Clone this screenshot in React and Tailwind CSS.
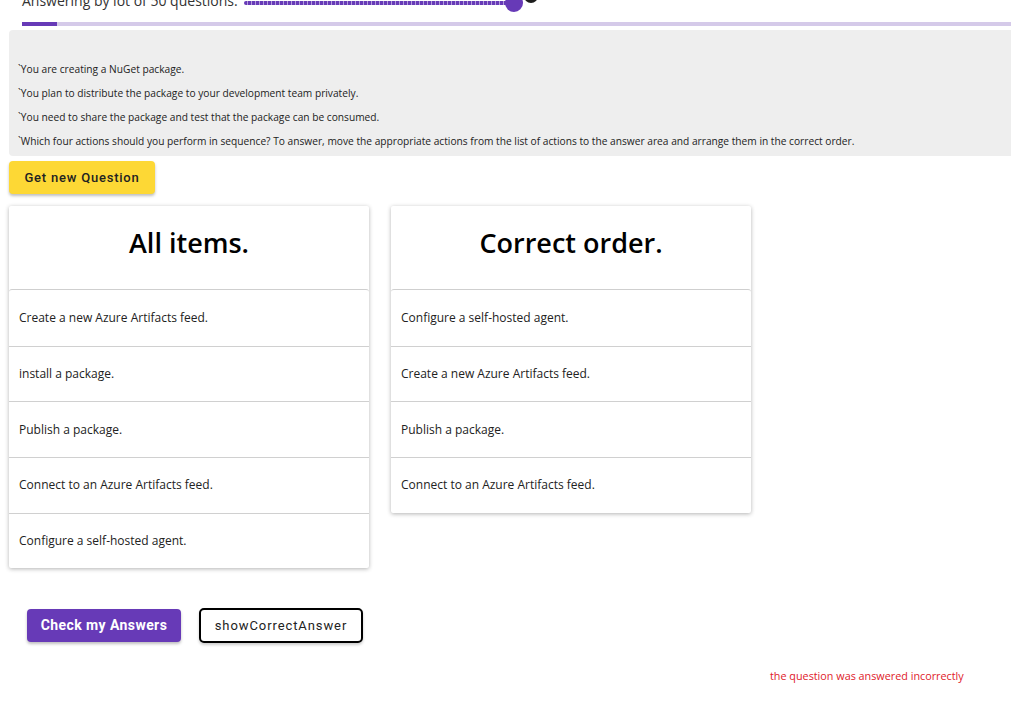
import React from "react";

const allItems = [
  "Create a new Azure Artifacts feed.",
  "install a package.",
  "Publish a package.",
  "Connect to an Azure Artifacts feed.",
  "Configure a self-hosted agent.",
];

const correctItems = [
  "Configure a self-hosted agent.",
  "Create a new Azure Artifacts feed.",
  "Publish a package.",
  "Connect to an Azure Artifacts feed.",
];

const questionLines = [
  "`You are creating a NuGet package.",
  "`You plan to distribute the package to your development team privately.",
  "`You need to share the package and test that the package can be consumed.",
  "`Which four actions should you perform in sequence? To answer, move the appropriate actions from the list of actions to the answer area and arrange them in the correct order.",
];

const Column = ({ title, items }) => (
  <div className="w-[360px] bg-white shadow-[0_1px_4px_rgba(0,0,0,0.3)] rounded-[2px]">
    <div className="h-[83px] flex items-center justify-center pb-[9px] text-[27px] font-semibold text-black">
      {title}
    </div>
    <div className="border-t border-[#cfcfcf] rounded-t-[3px]">
      {items.map((item, i) => (
        <div
          key={i}
          className={`h-[55.7px] flex items-center px-[10px] text-[12px] text-[#222] ${
            i > 0 ? "border-t border-[#d0d0d0]" : ""
          }`}
        >
          {item}
        </div>
      ))}
    </div>
  </div>
);

const App = () => {
  return (
    <div className="min-h-screen bg-white font-['Open_Sans',sans-serif] overflow-hidden">
      <div className="-mt-[9px] h-[31px] flex items-start pl-[22px]">
        <span className="text-[14px] leading-[20px] text-[#333]">Answering by lot of 50 questions:</span>
        <div className="relative ml-[6px] mt-[10px] w-[270px] h-[4px] bg-[#673ab7] rounded-full">
          <div className="absolute inset-0 bg-[repeating-linear-gradient(90deg,transparent_0,transparent_3px,#b39ddb_3px,#b39ddb_4px)] rounded-full" />
          <div className="absolute -right-[9px] -top-[7px] w-[18px] h-[18px] rounded-full bg-[#673ab7]" />
          <div className="absolute -right-[24px] -top-[12px] w-[14px] h-[14px] rounded-full bg-[#1d1d1d]" />
        </div>
      </div>
      <div className="ml-[22px] h-[4px] bg-[#d5cae9] flex">
        <div className="w-[35px] bg-[#673ab7]" />
      </div>
      <div className="mt-[4px] ml-[9px] h-[126px] bg-[#eeeeee] rounded-l-[4px] pt-[27px] pl-[9px] text-[10.2px] text-[#222]">
        {questionLines.map((l, i) => (
          <p key={i} className="h-[24px] leading-[24px]">
            {l}
          </p>
        ))}
      </div>
      <button className="mt-[5px] ml-[9px] w-[146px] h-[33px] bg-[#fdd835] rounded-[4px] shadow-[0_2px_3px_rgba(0,0,0,0.25)] text-[13px] font-medium tracking-[0.06em] text-[#222] font-['Roboto',sans-serif]">
        Get new Question
      </button>
      <div className="mt-[12px] ml-[9px] flex items-start gap-[22px]">
        <Column title="All items." items={allItems} />
        <Column title="Correct order." items={correctItems} />
      </div>
      <div className="mt-[40px] ml-[27px] flex items-center gap-[18px] font-['Roboto',sans-serif]">
        <button className="w-[154px] h-[33px] bg-[#673ab7] rounded-[4px] text-white text-[14px] font-bold tracking-[0.03em] shadow-[0_2px_3px_rgba(0,0,0,0.25)]">
          Check my Answers
        </button>
        <button className="w-[164px] h-[35px] bg-white border-2 border-black rounded-[5px] text-[13px] font-normal tracking-[0.07em] text-[#222] shadow-[0_2px_3px_rgba(0,0,0,0.2)]">
          showCorrectAnswer
        </button>
      </div>
      <div className="mt-[25px] pl-[770px] text-[10.8px] text-[#e0202a]">
        the question was answered incorrectly
      </div>
    </div>
  );
};

export default App;
